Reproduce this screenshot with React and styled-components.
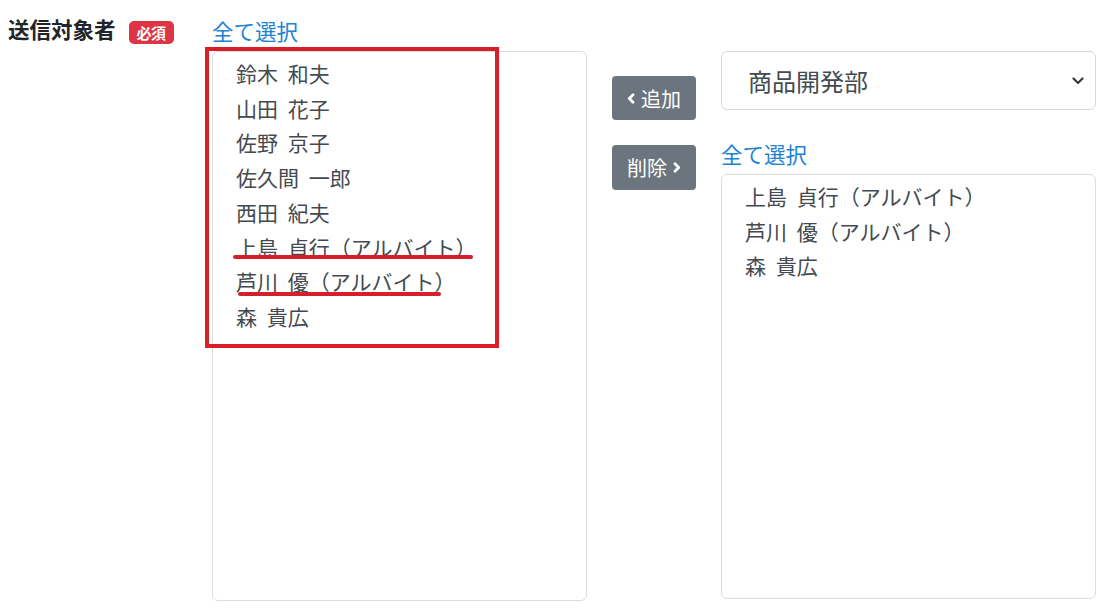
import React from "react";
import styled, { createGlobalStyle } from "styled-components";

const Global = createGlobalStyle`
  html, body { margin: 0; padding: 0; background: #fff; }
  body {
    font-family: "Noto Sans CJK JP", "Noto Sans", sans-serif;
    color: #212529;
  }
`;

const Page = styled.div`
  display: flex;
  align-items: flex-start;
  width: 1107px;
  height: 612px;
  overflow: hidden;
`;

const LabelCol = styled.div`
  width: 204px;
  padding: 14px 0 0 8px;
  display: flex;
  align-items: center;
  gap: 13px;
`;

const Label = styled.span`
  font-size: 21.5px;
  font-weight: 700;
  line-height: 30px;
  color: #212529;
`;

const Badge = styled.span`
  display: inline-flex;
  align-items: center;
  justify-content: center;
  width: 45px;
  height: 23px;
  margin-top: 6px;
  border-radius: 5px;
  background: #dc3545;
  color: #fff;
  font-size: 15px;
  font-weight: 700;
  letter-spacing: -0.5px;
`;

const ListCol = styled.div`
  position: relative;
  width: 375px;
  padding-top: ${(p) => p.$top}px;
  display: flex;
  flex-direction: column;
`;

const SelectAll = styled.a`
  display: block;
  height: 36px;
  line-height: 32px;
  font-size: 21.5px;
  color: #2282d2;
  text-decoration: none;
  cursor: pointer;
  margin-top: ${(p) => p.$mt || 0}px;
`;

const ListBox = styled.div`
  box-sizing: border-box;
  height: ${(p) => p.$h}px;
  border: 1px solid #dadde0;
  border-radius: 6px;
  padding: 4px 0 0 23px;
  background: #fff;
`;

const Item = styled.div`
  position: relative;
  font-size: 21px;
  line-height: 34.7px;
  word-spacing: 5px;
  color: #444a50;
  white-space: nowrap;
`;

const Underline = styled.span`
  position: absolute;
  left: ${(p) => p.$left}px;
  top: ${(p) => p.$top}px;
  width: ${(p) => p.$w}px;
  height: 4px;
  border-radius: 2px;
  background: #d71f2b;
`;

const Highlight = styled.div`
  position: absolute;
  left: -7px;
  top: 47px;
  width: 294px;
  height: 301px;
  box-sizing: border-box;
  border: 4px solid #d91e28;
  pointer-events: none;
`;

const ButtonCol = styled.div`
  width: 109px;
  padding: 76px 0 0 25px;
  display: flex;
  flex-direction: column;
  gap: 25px;
`;

const MoveButton = styled.button`
  box-sizing: border-box;
  width: 84px;
  height: ${(p) => p.$h}px;
  border: none;
  border-radius: 4px;
  background: #6c757d;
  color: #fff;
  font-family: inherit;
  font-size: 20px;
  display: flex;
  align-items: center;
  justify-content: center;
  gap: 6px;
  padding: 0;
  cursor: pointer;
`;

const Arrow = ({ dir }) => (
  <svg width="8" height="11" viewBox="0 0 8 11">
    <path
      d={dir === "left" ? "M6 1.8 L2.3 5.5 L6 9.2" : "M2 1.8 L5.7 5.5 L2 9.2"}
      fill="none"
      stroke="#fff"
      strokeWidth="2.8"
      strokeLinecap="round"
      strokeLinejoin="round"
    />
  </svg>
);

const SelectBox = styled.div`
  box-sizing: border-box;
  height: 59px;
  border: 1px solid #d6d9dc;
  border-radius: 6px;
  display: flex;
  align-items: center;
  justify-content: space-between;
  padding: 0 10px 0 26px;
  font-size: 24px;
  color: #444a50;
`;

const Chevron = () => (
  <svg width="14" height="10" viewBox="0 0 14 10">
    <path d="M2.5 2.5 L7 7 L11.5 2.5" fill="none" stroke="#343a40" strokeWidth="2.2" strokeLinecap="round" strokeLinejoin="round" />
  </svg>
);

const leftNames = [
  "鈴木 和夫",
  "山田 花子",
  "佐野 京子",
  "佐久間 一郎",
  "西田 紀夫",
  "上島 貞行（アルバイト）",
  "芦川 優（アルバイト）",
  "森 貴広",
];

const marks = {
  5: { left: -3, top: 25, w: 240 },
  6: { left: 2, top: 28, w: 203 },
};

const rightNames = ["上島 貞行（アルバイト）", "芦川 優（アルバイト）", "森 貴広"];

export default function App() {
  return (
    <>
      <Global />
      <Page>
        <LabelCol>
          <Label>送信対象者</Label>
          <Badge>必須</Badge>
        </LabelCol>
        <ListCol $top={15}>
          <SelectAll>全て選択</SelectAll>
          <ListBox $h={550}>
            {leftNames.map((n, i) => (
              <Item key={n}>
                {n}
                {marks[i] && <Underline $left={marks[i].left} $top={marks[i].top} $w={marks[i].w} />}
              </Item>
            ))}
          </ListBox>
          <Highlight />
        </ListCol>
        <ButtonCol>
          <MoveButton $h={44}>
            <Arrow dir="left" />
            追加
          </MoveButton>
          <MoveButton $h={45}>
            削除
            <Arrow dir="right" />
          </MoveButton>
        </ButtonCol>
        <ListCol $top={51}>
          <SelectBox>
            <span>商品開発部</span>
            <Chevron />
          </SelectBox>
          <SelectAll $mt={28}>全て選択</SelectAll>
          <ListBox $h={425}>
            {rightNames.map((n) => (
              <Item key={n}>{n}</Item>
            ))}
          </ListBox>
        </ListCol>
      </Page>
    </>
  );
}
